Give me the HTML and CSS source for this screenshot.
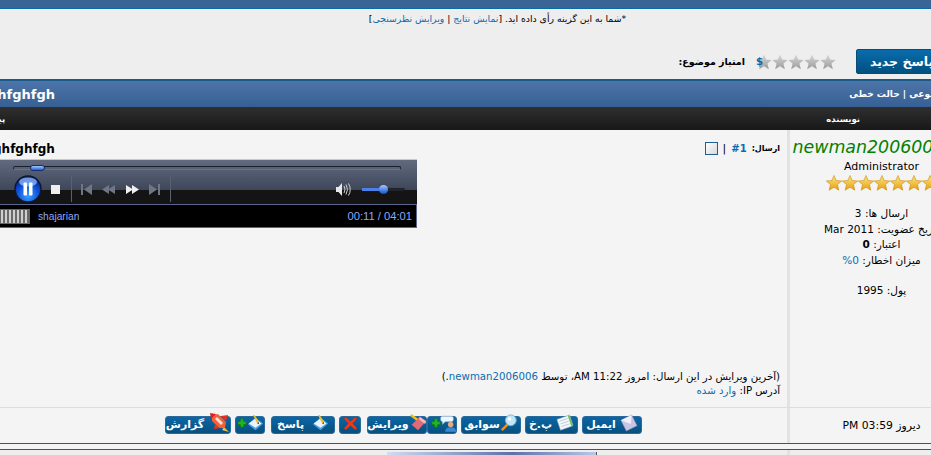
FILE: index.html

```html
<!DOCTYPE html>
<html lang="fa" dir="rtl">
<head>
    <meta charset="UTF-8">
    <title>ghfghfgh</title>
    <link rel="stylesheet" href="styles.css">
</head>
<body>
    <svg class="defs" width="0" height="0">
        <defs>
            <linearGradient id="gold" x1="0" y1="0" x2="0" y2="1">
                <stop offset="0" stop-color="#ffe680"/>
                <stop offset="1" stop-color="#e8a010"/>
            </linearGradient>
            <linearGradient id="grey" x1="0" y1="0" x2="0" y2="1">
                <stop offset="0" stop-color="#d8d8d8"/>
                <stop offset="1" stop-color="#9c9c9c"/>
            </linearGradient>
            <radialGradient id="orb" cx="0.5" cy="0.75" r="0.7">
                <stop offset="0" stop-color="#3fa0ff"/>
                <stop offset="0.6" stop-color="#0b50d8"/>
                <stop offset="1" stop-color="#04208c"/>
            </radialGradient>
            <symbol id="star" viewBox="0 0 16 16">
                <polygon points="8,0.5 10.2,5.6 15.7,6 11.5,9.6 12.8,15.2 8,12.2 3.2,15.2 4.5,9.6 0.3,6 5.8,5.6"/>
            </symbol>
            <symbol id="i-rocket" viewBox="0 0 20 20">
                <polygon points="14,14 19,19 12,17" fill="#f4c040"/>
                <polygon points="2,2 8,1 16,9 15,15 9,15 2,8" fill="#f4603a"/>
                <polygon points="7,4 13,10 11,12 5,6" fill="#fde0d0"/>
                <polygon points="0,0 6,1 1,6" fill="#e02020"/>
                <polygon points="5,11 10,15 4,16" fill="#e83020"/>
                <polygon points="11,3 16,8 18,2" fill="#e83020"/>
            </symbol>
            <symbol id="i-reply" viewBox="0 0 20 20">
                <polygon points="1,11 10,3 19,10 10,18" fill="#4ea0e0"/>
                <polygon points="2,10 10,4 17,10 10,15" fill="#eaf4ff"/>
                <polygon points="7,0 9,0 14,8 12,10" fill="#f0c020"/>
                <polygon points="12,10 14,8 14,11" fill="#603010"/>
            </symbol>
            <symbol id="i-plus" viewBox="0 0 12 12">
                <path d="M4 1h4v3h3v4H8v3H4V8H1V4h3z" fill="#22b422" stroke="#0c6c0c" stroke-width="0.7"/>
            </symbol>
            <symbol id="i-cross" viewBox="0 0 16 16">
                <path d="M1 3l2-2 5 4.500L13 1l2 2-4.500 5 4.500 5-2 2-5-4.500L3 15l-2-2 4.500-5z" fill="#e83a20" stroke="#a82010" stroke-width="0.5"/>
            </symbol>
            <symbol id="i-eraser" viewBox="0 0 20 20">
                <polygon points="1,2 3,0 11,6 9,8" fill="#f0c020"/>
                <polygon points="3,12 12,3 19,8 10,18" fill="#e06a78"/>
                <polygon points="12,3 19,8 18,11 11,6" fill="#f6b8c0"/>
            </symbol>
            <symbol id="i-user" viewBox="0 0 22 18">
                <path d="M6 1h10a2 2 0 0 1 2 2v2a2 2 0 0 1-2 2H9l-3 3V7a2 2 0 0 1-2-2V3a2 2 0 0 1 2-2z" fill="#eef6ff" stroke="#88a8c8" stroke-width="0.6"/>
                <circle cx="15" cy="10" r="3" fill="#e8a878"/>
                <path d="M9 18c0-3.500 2.500-5 6-5s6 1.500 6 5z" fill="#3c88d8"/>
            </symbol>
            <symbol id="i-search" viewBox="0 0 20 20">
                <polygon points="8,10 10,12 3,19 1,17" fill="#e89030"/>
                <circle cx="12" cy="7" r="6" fill="#bfe6fa" stroke="#70b0d8"/>
                <circle cx="10.500" cy="5.500" r="2" fill="#ffffff"/>
            </symbol>
            <symbol id="i-note" viewBox="0 0 20 20">
                <polygon points="1,6 15,1 19,13 5,18" fill="#f4f8fc" stroke="#88a0b8" stroke-width="0.6"/>
                <polygon points="15,1 19,13 17,14 13,2" fill="#70c060"/>
                <path d="M4 8l9-3M5 11l9-3M6 14l9-3" stroke="#a8b8c8" stroke-width="0.8"/>
            </symbol>
            <symbol id="i-mail" viewBox="0 0 20 20">
                <polygon points="1,7 13,1 19,13 7,19" fill="#c8c4e4" stroke="#8884b4" stroke-width="0.6"/>
                <polygon points="1,7 13,1 12,11" fill="#f0eef8"/>
            </symbol>
        </defs>
    </svg>

    <div class="page">
        <div class="top-bar"></div>

        <div class="poll-box">
            <p class="poll-msg">*شما به این گزینه رأی داده اید. [<a href="#">نمایش نتایج</a> | <a href="#">ویرایش نظرسنجی</a>]</p>
            <div class="rate-row">
                <a class="new-reply" href="#">پاسخ جدید</a>
                <div class="rate-stars">
                    <svg class="star"><use href="#star" fill="url(#grey)"/></svg>
                    <svg class="star"><use href="#star" fill="url(#grey)"/></svg>
                    <svg class="star"><use href="#star" fill="url(#grey)"/></svg>
                    <svg class="star"><use href="#star" fill="url(#grey)"/></svg>
                    <svg class="star"><use href="#star" fill="url(#grey)"/></svg>
                    <span class="rate-mark">$</span>
                </div>
                <span class="rate-label">امتیاز موضوع:</span>
            </div>
        </div>

        <div class="thread-head">
            <span class="modes">موضوعی | حالت خطی</span>
            <span class="thread-title">ghfghfgh</span>
        </div>

        <div class="col-head">
            <span class="col-author">نویسنده</span>
            <span class="col-msg">پیام</span>
        </div>

        <div class="post">
            <div class="author">
                <a class="nick" href="#">newman2006006</a>
                <div class="rank">Administrator</div>
                <div class="rank-stars">
                    <svg class="star"><use href="#star" fill="url(#gold)"/></svg>
                    <svg class="star"><use href="#star" fill="url(#gold)"/></svg>
                    <svg class="star"><use href="#star" fill="url(#gold)"/></svg>
                    <svg class="star"><use href="#star" fill="url(#gold)"/></svg>
                    <svg class="star"><use href="#star" fill="url(#gold)"/></svg>
                    <svg class="star"><use href="#star" fill="url(#gold)"/></svg>
                    <svg class="star"><use href="#star" fill="url(#gold)"/></svg>
                </div>
                <div class="stats">
                    <div>ارسال ها: 3</div>
                    <div>تاریخ عضویت: Mar 2011</div>
                    <div>اعتبار: <b>0</b></div>
                    <div>میزان اخطار: <a href="#">0%</a></div>
                </div>
                <div class="money">پول: 1995</div>
            </div>

            <div class="message">
                <div class="msg-top">
                    <div class="msg-meta">
                        <b class="small">ارسال:</b>
                        <a class="post-no" href="#">#1</a>
                        <span class="pipe">|</span>
                        <span class="check"></span>
                    </div>
                    <b class="msg-title">ghfghfgh</b>
                </div>

                <div class="player">
                    <div class="seek"><span class="seek-thumb"></span></div>
                    <div class="controls">
                        <svg class="pause" width="28" height="28" viewBox="0 0 28 28">
                            <circle cx="14" cy="14" r="13" fill="url(#orb)" stroke="#101830" stroke-width="1.500"/>
                            <ellipse cx="14" cy="7" rx="9" ry="4.500" fill="#9cc8ff" opacity="0.7"/>
                            <rect x="9.500" y="7.500" width="3.500" height="13" rx="1" fill="#fff"/>
                            <rect x="15" y="7.500" width="3.500" height="13" rx="1" fill="#fff"/>
                        </svg>
                        <span class="stop"></span>
                        <span class="sep"></span>
                        <svg class="tr tr-prev" width="11" height="11" viewBox="0 0 11 11"><path d="M0 0h2v11H0zM11 0v11L3 5.500z" fill="#6f7686"/></svg>
                        <svg class="tr tr-rew" width="13" height="9" viewBox="0 0 13 9"><path d="M7 0v9L0 4.500zM13 0v9L6 4.500z" fill="#6f7686"/></svg>
                        <svg class="tr tr-ff" width="13" height="9" viewBox="0 0 13 9"><path d="M0 0v9l7-4.500zM6 0v9l7-4.500z" fill="#f0f0f4"/></svg>
                        <svg class="tr tr-next" width="11" height="11" viewBox="0 0 11 11"><path d="M9 0h2v11H9zM0 0v11l8-5.500z" fill="#6f7686"/></svg>
                        <span class="sep sep-b"></span>
                        <svg class="vol" width="15" height="13" viewBox="0 0 15 13">
                            <path d="M0 4h2.500L6 0v13L2.500 9H0z" fill="#e8e8ec"/>
                            <path d="M8 3q2 3.500 0 7M10 1.500q3 5 0 10M12.500 0.500q3.500 6 0 12" fill="none" stroke="#d0d0d8" stroke-width="1"/>
                        </svg>
                        <div class="vol-track"><span class="vol-fill"></span><span class="vol-thumb"></span></div>
                    </div>
                    <div class="display">
                        <span class="vis"></span>
                        <span class="clip-name">shajarian</span>
                        <span class="clip-time">00:11 / 04:01</span>
                    </div>
                </div>

                <div class="edit-note">
                    <div>(آخرین ویرایش در این ارسال: امروز 11:22 AM، توسط <a href="#">newman2006006</a>.)</div>
                    <div>آدرس IP: <a href="#">وارد شده</a></div>
                </div>
            </div>
        </div>

        <div class="post-foot">
            <div class="post-date">دیروز 03:59 PM</div>
            <div class="actions">
                <a class="btn btn-mail" href="#"><svg width="18" height="18"><use href="#i-mail"/></svg>ایمیل</a>
                <a class="btn btn-pm" href="#"><svg width="18" height="18"><use href="#i-note"/></svg>پ.خ</a>
                <a class="btn btn-hist" href="#"><svg width="18" height="18"><use href="#i-search"/></svg>سوابق</a>
                <a class="btn btn-friend" href="#"><svg class="ic-user" width="20" height="17"><use href="#i-user"/></svg><svg width="10" height="10"><use href="#i-plus"/></svg></a>
                <a class="btn btn-edit" href="#"><svg width="18" height="18"><use href="#i-eraser"/></svg>ویرایش</a>
                <a class="btn btn-del" href="#"><svg width="15" height="15"><use href="#i-cross"/></svg></a>
                <a class="btn btn-reply" href="#"><svg width="17" height="17"><use href="#i-reply"/></svg>پاسخ</a>
                <a class="btn btn-quote" href="#"><svg width="17" height="17"><use href="#i-reply"/></svg><svg width="10" height="10"><use href="#i-plus"/></svg></a>
                <a class="btn btn-report" href="#"><svg width="20" height="20"><use href="#i-rocket"/></svg>گزارش</a>
            </div>
        </div>

        <div class="foot-rule"></div>
        <div class="next-row">
            <div class="next-author"></div>
            <div class="next-body"><span class="next-pic"></span></div>
        </div>
    </div>
</body>
</html>
```

FILE: styles.css

```css
html, body {
    margin: 0;
    padding: 0;
    height: 455px;
    overflow: hidden;
    background: #eeeeee;
}

body {
    width: 931px;
    font-family: "DejaVu Sans", sans-serif;
    font-size: 10px;
    color: #000;
}

a {
    color: #0a6cb0;
    text-decoration: none;
}

.defs {
    display: block;
    height: 0;
}

.star {
    width: 16px;
    height: 16px;
    display: block;
    flex: none;
}

/* page is wider than the window on both sides */
.page {
    width: 993px;
    margin-right: -42px;
    margin-left: -20px;
}

.top-bar {
    height: 8px;
    background: #3b6496;
    border-bottom: 1px solid #0a6aa8;
}

.poll-box {
    height: 70px;
    background: #eeeeee;
}

.poll-msg {
    margin: 0;
    padding: 3px 0 0 42px;
    height: 24px;
    box-sizing: border-box;
    text-align: center;
    line-height: 13px;
    font-size: 9.300px;
}

.rate-row {
    display: flex;
    align-items: center;
    padding: 16px 12px 0 0;
}

.new-reply {
    width: 105px;
    height: 25px;
    line-height: 23px;
    box-sizing: border-box;
    padding-right: 14px;
    text-align: center;
    color: #fff;
    font-weight: bold;
    font-size: 12.500px;
    letter-spacing: 1.500px;
    background: linear-gradient(#0a6cac, #00507f);
    border: 1px solid #0a4a78;
    border-radius: 2px;
}

.rate-stars {
    display: flex;
    position: relative;
    margin-right: 20px;
    width: 80px;
}

.rate-mark {
    position: absolute;
    left: 0;
    top: 2px;
    color: #0a6cb0;
    font-weight: bold;
    font-size: 10px;
    line-height: 12px;
}

.rate-label {
    margin-right: 11px;
    font-weight: bold;
    font-size: 9.500px;
}

.thread-head {
    height: 26px;
    border-top: 2px solid #1a5a88;
    background: linear-gradient(#4d75aa, #365f93);
    display: flex;
    justify-content: space-between;
    align-items: center;
    padding: 0 23px 0 8px;
    color: #fff;
}

.modes {
    font-weight: bold;
    font-size: 9px;
}

.thread-title {
    font-weight: bold;
    font-size: 13px;
    direction: ltr;
}

.col-head {
    height: 23px;
    background: linear-gradient(#2f2f2f, #181818);
    color: #fff;
    font-weight: bold;
    font-size: 8.500px;
    display: flex;
    justify-content: space-between;
    align-items: center;
    padding: 0 113px 0 9px;
}

.post {
    display: grid;
    grid-template-columns: 186px 1fr;
    height: 277px;
    background: #f4f4f4;
    border-bottom: 1px solid #dddddd;
}

.author {
    border-left: 3px solid #e2e2e2;
    text-align: center;
    padding-top: 7px;
}

.nick {
    display: block;
    padding-right: 26px;
    height: 20px;
    line-height: 20px;
    color: #008000;
    font-size: 17.400px;
    font-style: italic;
    white-space: nowrap;
}

.rank {
    margin-top: 3px;
    line-height: 14px;
    font-size: 11px;
}

.rank-stars {
    display: flex;
    justify-content: center;
    margin-top: 1px;
}

.rank-stars use {
    stroke: #c98a10;
    stroke-width: 0.6;
}

.stats {
    margin-top: 15px;
    line-height: 15.500px;
    font-size: 10.500px;
    white-space: nowrap;
}

.money {
    margin-top: 15px;
    line-height: 15px;
    font-size: 10.500px;
}

.message {
    display: flex;
    flex-direction: column;
    padding: 12px 7px 0 13px;
}

.msg-top {
    display: flex;
    justify-content: space-between;
    align-items: center;
    height: 13px;
}

.msg-meta {
    display: flex;
    align-items: center;
    gap: 5px;
}

.small {
    font-size: 8px;
}

.post-no {
    font-weight: bold;
    font-size: 10px;
}

.pipe {
    font-size: 11px;
}

.check {
    width: 13px;
    height: 13px;
    box-sizing: border-box;
    border: 1px solid #1a5f95;
    background: linear-gradient(135deg, #ffffff, #d8d8d8);
}

.msg-title {
    font-size: 12px;
    direction: ltr;
}

.player {
    direction: ltr;
    align-self: flex-end;
    width: 424px;
    height: 69px;
    margin-top: 4px;
    box-sizing: border-box;
    border-top: 1px solid #c8c8c8;
    background: linear-gradient(#626a80 0, #3e4658 30px, #141414 30px);
}

.seek {
    position: relative;
    height: 4px;
    margin: 6px 16px 0 20px;
    border: 1px solid #1a1e28;
    border-bottom-color: #6a7288;
    border-radius: 3px;
    box-sizing: border-box;
}

.seek-thumb {
    position: absolute;
    left: 16px;
    top: -2px;
    width: 15px;
    height: 6px;
    border-radius: 3px;
    background: linear-gradient(#a8c8ff, #2060e0);
    border: 1px solid #14306c;
    box-sizing: border-box;
}

.controls {
    display: flex;
    align-items: center;
    height: 30px;
    margin-top: 4px;
    padding: 0 12px 0 21px;
}

.stop {
    width: 9px;
    height: 9px;
    margin-left: 9px;
    background: #eeeeee;
}

.sep {
    width: 1px;
    height: 26px;
    margin-left: 11px;
    background: #5a6070;
}

.tr-prev { margin-left: 9px; }
.tr-rew { margin-left: 10px; }
.tr-ff { margin-left: 11px; }
.tr-next { margin-left: 10px; }
.sep-b { margin-left: 10px; }
.vol { margin-left: auto; }

.vol-track {
    position: relative;
    width: 43px;
    height: 3px;
    margin-left: 11px;
    background: #20242c;
    border-radius: 2px;
}

.vol-fill {
    position: absolute;
    left: 0;
    top: 0;
    width: 22px;
    height: 3px;
    background: #4a80e8;
}

.vol-thumb {
    position: absolute;
    left: 17px;
    top: -3px;
    width: 9px;
    height: 9px;
    border-radius: 50%;
    background: linear-gradient(#a8c8ff, #1050d0);
}

.display {
    display: flex;
    align-items: center;
    height: 24px;
    box-sizing: border-box;
    border: 1px solid #5a648c;
    background: #000;
    color: #8ea8f8;
    font-family: "Liberation Sans", sans-serif;
    font-size: 11.200px;
    padding: 0 4px 0 6px;
}

.vis {
    width: 30px;
    height: 15px;
    box-sizing: border-box;
    border: 1px solid #666;
    background: repeating-linear-gradient(90deg, #cfcfcf 0, #cfcfcf 2px, #6a6a6a 2px, #6a6a6a 4px);
}

.clip-name {
    margin-left: 8px;
    font-size: 10.200px;
}

.clip-time {
    margin-left: auto;
}

.edit-note {
    margin-top: auto;
    padding-bottom: 9px;
    line-height: 14px;
    font-size: 10.200px;
}

.post-foot {
    display: grid;
    grid-template-columns: 186px 1fr;
    height: 35px;
    background: #f4f4f4;
}

.post-date {
    border-left: 3px solid #e2e2e2;
    text-align: center;
    line-height: 35px;
    font-size: 10.800px;
}

.actions {
    display: flex;
    align-items: center;
    padding: 0 145px 2px 0;
    gap: 4px;
}

.btn {
    display: flex;
    align-items: center;
    justify-content: center;
    height: 18px;
    box-sizing: border-box;
    color: #fff;
    font-weight: bold;
    font-size: 11px;
    background: linear-gradient(#0c66a4, #07507f);
    border: 1px solid #2a6a9a;
    border-radius: 3px;
    white-space: nowrap;
}

.btn svg {
    flex: none;
    margin-top: -3px;
}

.btn-mail { width: 60px; gap: 4px; }
.btn-pm { width: 53px; gap: 4px; }
.btn-hist { width: 60px; }
.btn-friend { width: 30px; margin-left: -4px; }
.btn-friend .ic-user { margin-left: -4px; margin-right: -3px; }
.btn-edit { width: 60px; }
.btn-del { width: 22px; margin-right: 2px; }
.btn-reply { width: 64px; gap: 8px; }
.btn-quote { width: 30px; margin-right: 2px; }
.btn-report { width: 66px; gap: 6px; }

.foot-rule {
    height: 5px;
    border-top: 1px solid #1a6096;
    border-bottom: 1px solid #1a6096;
    background: #f4f4f4;
}

.next-row {
    display: grid;
    grid-template-columns: 186px 1fr;
    height: 10px;
}

.next-author {
    border-left: 3px solid #e2e2e2;
}

.next-pic {
    display: block;
    width: 210px;
    height: 8px;
    margin: 2px 190px 0 0;
    box-sizing: border-box;
    background: linear-gradient(90deg, #cfdcf2, #5f70a8 60%, #b8c8e8);
    border-right: 1px solid #555;
}
```
